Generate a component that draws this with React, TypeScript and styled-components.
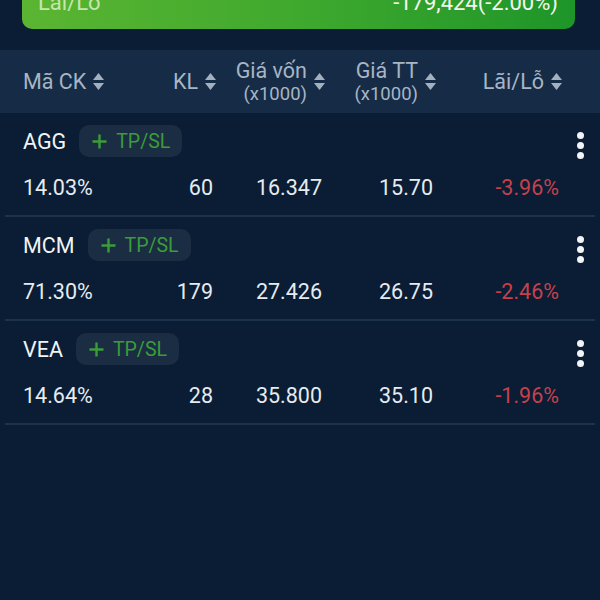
import styled, { createGlobalStyle } from "styled-components";

const GlobalStyle = createGlobalStyle`
  html, body {
    margin: 0;
    padding: 0;
    background: #0a1d34;
  }
  body {
    font-family: Roboto, "Noto Sans", "Liberation Sans", sans-serif;
    overflow: hidden;
  }
`;

const Page = styled.div`
  width: 600px;
  height: 600px;
  background: #0a1d34;
  overflow: hidden;
  display: flex;
  flex-direction: column;
`;

const SummaryCard = styled.div`
  margin: -31px 25px 0 22px;
  height: 60px;
  border-radius: 10px;
  background: linear-gradient(90deg, #5bb532 0%, #3fa92e 50%, #1e9529 100%);
  display: flex;
  align-items: center;
  justify-content: space-between;
  padding: 6px 17px 0 16px;
  box-sizing: border-box;
  font-size: 22px;
`;

const SummaryLabel = styled.span`
  color: #c6e6ae;
`;

const SummaryValue = styled.span`
  color: #f2f7ee;
`;

const HeaderBar = styled.div`
  margin-top: 21px;
  height: 63px;
  background: #162c46;
  display: grid;
  grid-template-columns: 140px 54px 109px 111px 126px;
  padding-left: 23px;
  align-items: center;
  color: #a7b5c5;
`;

const HeadCell = styled.div<{ $left?: boolean }>`
  display: flex;
  align-items: center;
  justify-content: ${(p) => (p.$left ? "flex-start" : "flex-end")};
  gap: 6px;
`;

const HeadLabel = styled.div`
  display: flex;
  flex-direction: column;
  align-items: flex-end;
  font-size: 21.5px;
  line-height: 25px;
`;

const SubLabel = styled.span`
  font-size: 18.5px;
  line-height: 22px;
`;

const RowList = styled.div`
  display: flex;
  flex-direction: column;
`;

const Row = styled.div`
  margin: 0 5px;
  padding: 12px 11px 16px 18px;
  border-bottom: 2px solid #1d334c;
  display: flex;
  flex-direction: column;
  gap: 18px;
`;

const TopLine = styled.div`
  display: flex;
  align-items: center;
  height: 32px;
`;

const Symbol = styled.span`
  color: #f1f4f7;
  font-size: 21.5px;
  margin-right: 13px;
`;

const TpSlButton = styled.button`
  height: 32px;
  padding: 0 12px 0 13px;
  border: none;
  border-radius: 10px;
  background: #1a2d43;
  color: #3b9c3a;
  font-family: inherit;
  font-size: 19.5px;
  display: flex;
  align-items: center;
  gap: 9px;
`;

const Kebab = styled.div`
  margin-left: auto;
  display: flex;
  flex-direction: column;
  gap: 3px;
  margin-top: 8px;
`;

const Dot = styled.span`
  width: 7px;
  height: 7px;
  border-radius: 50%;
  background: #f2f4f7;
`;

const ValueLine = styled.div`
  display: grid;
  grid-template-columns: 140px 54px 109px 111px 126px;
  height: 24px;
  align-items: center;
  font-size: 21.5px;
  color: #e6ebf0;
`;

const Value = styled.span<{ $left?: boolean; $loss?: boolean }>`
  text-align: ${(p) => (p.$left ? "left" : "right")};
  padding-right: ${(p) => (p.$left ? "0" : "4px")};
  color: ${(p) => (p.$loss ? "#c4414c" : "inherit")};
`;

function SortIcon() {
  return (
    <svg width="13" height="19" viewBox="0 0 13 19">
      <polygon points="1,8 6.5,1 12,8" fill="#a2b0c0" />
      <polygon points="1,11 12,11 6.5,18" fill="#a2b0c0" />
    </svg>
  );
}

function PlusIcon() {
  return (
    <svg width="15" height="15" viewBox="0 0 15 15">
      <path d="M7.5 0.5v14M0.5 7.5h14" stroke="#3b9c3a" strokeWidth="2.4" />
    </svg>
  );
}

type Position = {
  symbol: string;
  ratio: string;
  qty: string;
  cost: string;
  price: string;
  pl: string;
};

const positions: Position[] = [
  { symbol: "AGG", ratio: "14.03%", qty: "60", cost: "16.347", price: "15.70", pl: "-3.96%" },
  { symbol: "MCM", ratio: "71.30%", qty: "179", cost: "27.426", price: "26.75", pl: "-2.46%" },
  { symbol: "VEA", ratio: "14.64%", qty: "28", cost: "35.800", price: "35.10", pl: "-1.96%" },
];

export default function App() {
  return (
    <Page>
      <GlobalStyle />
      <SummaryCard>
        <SummaryLabel>Lãi/Lỗ</SummaryLabel>
        <SummaryValue>-179,424(-2.00%)</SummaryValue>
      </SummaryCard>

      <HeaderBar>
        <HeadCell $left>
          <HeadLabel>Mã CK</HeadLabel>
          <SortIcon />
        </HeadCell>
        <HeadCell>
          <HeadLabel>KL</HeadLabel>
          <SortIcon />
        </HeadCell>
        <HeadCell>
          <HeadLabel>
            Giá vốn
            <SubLabel>(x1000)</SubLabel>
          </HeadLabel>
          <SortIcon />
        </HeadCell>
        <HeadCell>
          <HeadLabel>
            Giá TT
            <SubLabel>(x1000)</SubLabel>
          </HeadLabel>
          <SortIcon />
        </HeadCell>
        <HeadCell>
          <HeadLabel>Lãi/Lỗ</HeadLabel>
          <SortIcon />
        </HeadCell>
      </HeaderBar>

      <RowList>
        {positions.map((p) => (
          <Row key={p.symbol}>
            <TopLine>
              <Symbol>{p.symbol}</Symbol>
              <TpSlButton>
                <PlusIcon />
                TP/SL
              </TpSlButton>
              <Kebab>
                <Dot />
                <Dot />
                <Dot />
              </Kebab>
            </TopLine>
            <ValueLine>
              <Value $left>{p.ratio}</Value>
              <Value>{p.qty}</Value>
              <Value>{p.cost}</Value>
              <Value>{p.price}</Value>
              <Value $loss>{p.pl}</Value>
            </ValueLine>
          </Row>
        ))}
      </RowList>
    </Page>
  );
}
